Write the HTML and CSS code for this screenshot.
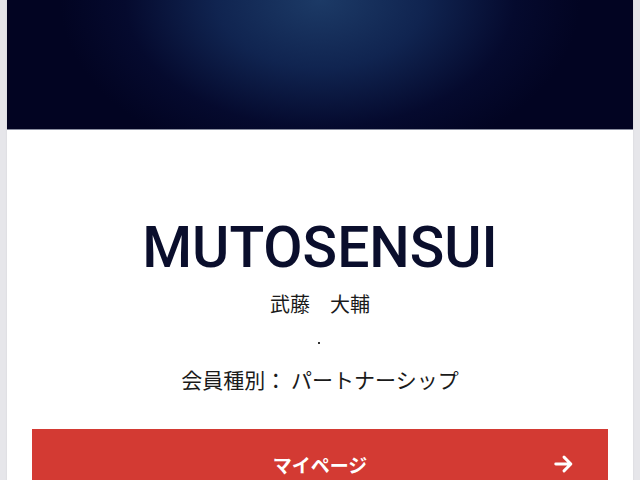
FILE: index.html
```html
<!DOCTYPE html>
<html lang="ja">
<head>
<meta charset="utf-8">
<link rel="stylesheet" href="styles.css">
</head>
<body>
<div class="page">
  <div class="card">
    <div class="hero"></div>
    <div class="body">
      <h1 class="title">MUTOSENSUI</h1>
      <p class="name">武藤　大輔</p>
      <p class="dot"><span></span></p>
      <p class="type">会員種別： パートナーシップ</p>
      <a class="btn" href="#">
        <span class="btn-label">マイページ</span>
        <svg class="arrow" viewBox="0 0 24 24" width="22" height="22"><path d="M3 12h16M12 4.5l7.5 7.5L12 19.5" fill="none" stroke="#fff" stroke-width="3.2" stroke-linecap="round" stroke-linejoin="round"/></svg>
      </a>
    </div>
  </div>
</div>
</body>
</html>
```
FILE: styles.css
```css
html, body {
  margin: 0;
  padding: 0;
  background: #e6e6ea;
  font-family: "Noto Sans CJK JP", "Noto Sans", sans-serif;
}
.page {
  padding: 0 7px;
  height: 480px;
  overflow: hidden;
}
.card {
  background: #fff;
  min-height: 480px;
  box-shadow: 0 0 2px rgba(0,0,0,0.08);
}
.hero {
  height: 130px;
  background: radial-gradient(ellipse 260px 170px at 50% 0%, #1c3a66 0%, #102450 40%, #050a2e 75%, #020422 100%);
  border-bottom: 1px solid #8a8fa0;
  box-sizing: border-box;
}
.body {
  padding: 88px 25px 0;
  display: flex;
  flex-direction: column;
  align-items: center;
}
.title {
  margin: 0;
  font-family: Roboto, "Liberation Sans", sans-serif;
  font-weight: 500;
  font-size: 57px;
  line-height: 60px;
  color: #0a0e2c;
  letter-spacing: 0;
}
.name {
  margin: 12px 0 0;
  font-size: 20px;
  line-height: 28px;
  color: #1a1a1a;
}
.dot {
  margin: 15px 0 0;
  height: 20px;
  display: flex;
  justify-content: center;
  align-items: center;
}
.dot span {
  display: block;
  width: 2px;
  height: 2px;
  background: #333;
  margin-left: -3px;
}
.type {
  margin: 12px 0 0;
  font-size: 21px;
  line-height: 29px;
  color: #1a1a1a;
}
.btn {
  margin-top: 35px;
  align-self: stretch;
  height: 70px;
  background: #d33a33;
  display: flex;
  align-items: center;
  justify-content: center;
  position: relative;
  text-decoration: none;
  color: #fff;
}
.btn-label {
  font-size: 19px;
  font-weight: 700;
}
.arrow {
  position: absolute;
  right: 33px;
  top: 24px;
}
```
